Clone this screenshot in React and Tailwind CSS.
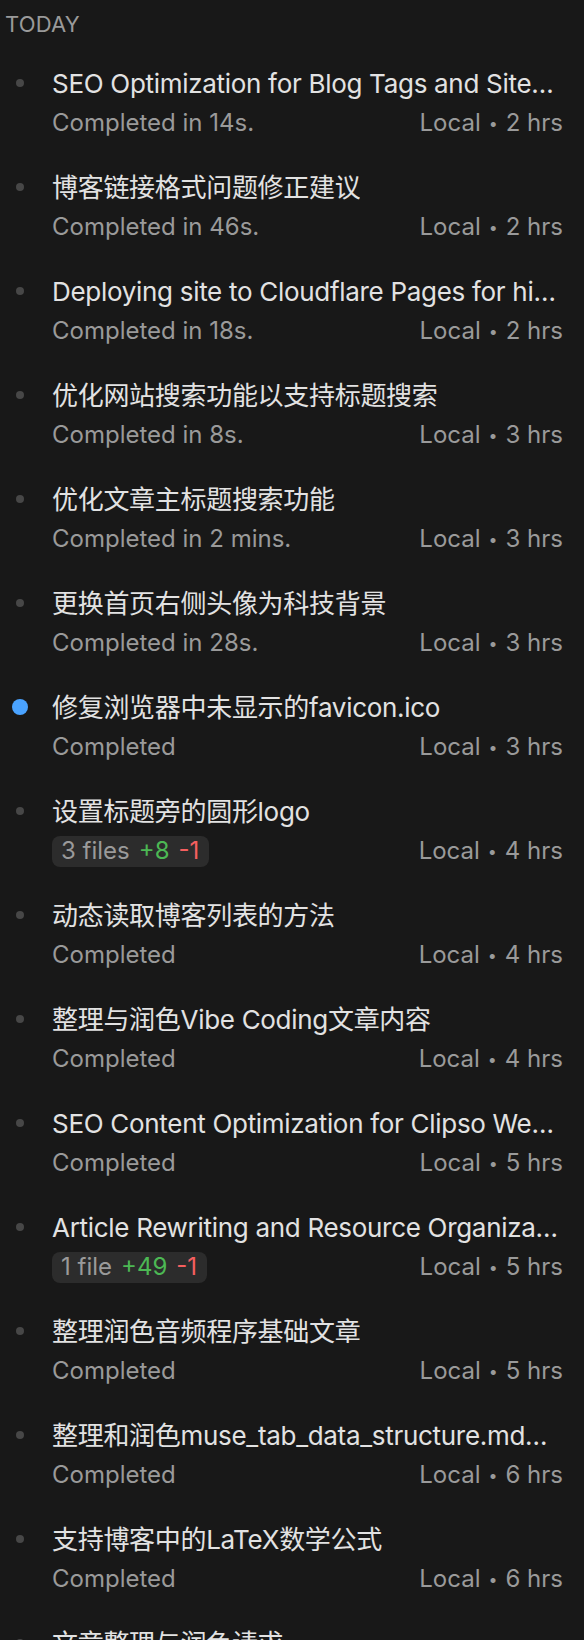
import React from "react";

const rows = [
  { t: "SEO Optimization for Blog Tags and Site…", s: "Completed in 14s.", r: "2 hrs" },
  { t: "博客链接格式问题修正建议", s: "Completed in 46s.", r: "2 hrs" },
  { t: "Deploying site to Cloudflare Pages for hi…", s: "Completed in 18s.", r: "2 hrs" },
  { t: "优化网站搜索功能以支持标题搜索", s: "Completed in 8s.", r: "3 hrs" },
  { t: "优化文章主标题搜索功能", s: "Completed in 2 mins.", r: "3 hrs" },
  { t: "更换首页右侧头像为科技背景", s: "Completed in 28s.", r: "3 hrs" },
  { t: "修复浏览器中未显示的favicon.ico", s: "Completed", r: "3 hrs", blue: true },
  { t: "设置标题旁的圆形logo", badge: ["3 files", "+8", "-1"], r: "4 hrs" },
  { t: "动态读取博客列表的方法", s: "Completed", r: "4 hrs" },
  { t: "整理与润色Vibe Coding文章内容", s: "Completed", r: "4 hrs" },
  { t: "SEO Content Optimization for Clipso We…", s: "Completed", r: "5 hrs" },
  { t: "Article Rewriting and Resource Organiza…", badge: ["1 file", "+49", "-1"], r: "5 hrs" },
  { t: "整理润色音频程序基础文章", s: "Completed", r: "5 hrs" },
  { t: "整理和润色muse_tab_data_structure.md…", s: "Completed", r: "6 hrs" },
  { t: "支持博客中的LaTeX数学公式", s: "Completed", r: "6 hrs" },
  { t: "文章整理与润色请求", s: "Completed", r: "6 hrs" },
];

export default function App() {
  return (
    <div
      className="w-[584px] h-[1640px] overflow-hidden bg-[#181818]"
      style={{ fontFamily: 'Inter, "Noto Sans CJK SC", sans-serif' }}
    >
      <div className="h-[48px] flex items-center pl-[5px] text-[22px] leading-none text-[#9a9a9a] tracking-[0.2px]">
        TODAY
      </div>
      {rows.map((row, i) => (
        <div key={i} className="flex h-[104px] pt-[19px] pr-[21px]">
          <div className="w-[40px] h-[32px] flex items-center justify-center shrink-0">
            {row.blue ? (
              <div className="w-[16px] h-[16px] rounded-full bg-[#4aa3ff]" />
            ) : (
              <div className="w-[8px] h-[8px] rounded-full bg-[#474747]" />
            )}
          </div>
          <div className="ml-[12px] flex-1 min-w-0 flex flex-col">
            <div className="h-[32px] flex items-center text-[26px] text-[#e2e2e2] whitespace-nowrap overflow-hidden tracking-[-0.3px]">
              <span className="truncate">{row.t}</span>
            </div>
            <div className="mt-[8px] h-[32px] flex items-center justify-between text-[24px] text-[#9a9a9a] whitespace-nowrap">
              {row.badge ? (
                <span className="h-[31px] flex items-center gap-[9px] rounded-[8px] bg-[#2c2c2c] pl-[9px] pr-[10px]">
                  <span>{row.badge[0]}</span>
                  <span className="text-[#4cb854]">{row.badge[1]}</span>
                  <span className="text-[#f55f5f]">{row.badge[2]}</span>
                </span>
              ) : (
                <span>{row.s}</span>
              )}
              <span className="flex items-center">
                <span>Local</span>
                <span className="text-[16px] mx-[8px]">•</span>
                <span>{row.r}</span>
              </span>
            </div>
          </div>
        </div>
      ))}
    </div>
  );
}
